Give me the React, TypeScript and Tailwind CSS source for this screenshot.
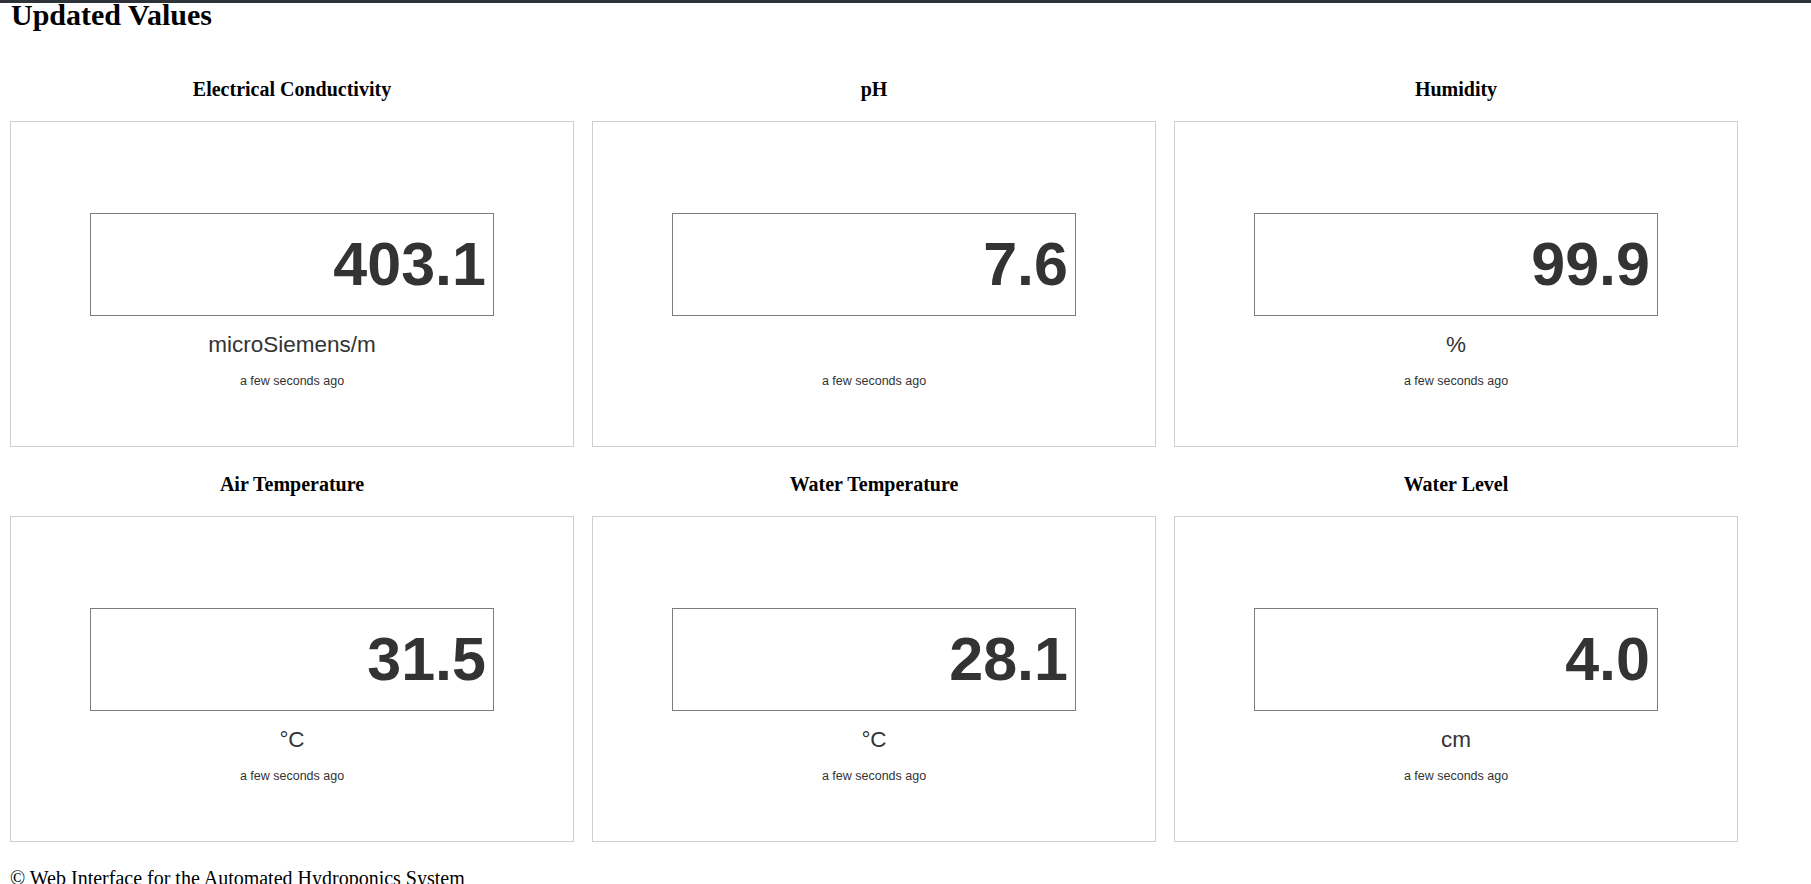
import React from 'react';

// --- Sensor readings shown on the dashboard ---
interface Reading {
  title: string;
  value: string;
  unit: string;
  updated: string;
}

const readings: Reading[] = [
  { title: 'Electrical Conductivity', value: '403.1', unit: 'microSiemens/m', updated: 'a few seconds ago' },
  { title: 'pH', value: '7.6', unit: '', updated: 'a few seconds ago' },
  { title: 'Humidity', value: '99.9', unit: '%', updated: 'a few seconds ago' },
  { title: 'Air Temperature', value: '31.5', unit: '°C', updated: 'a few seconds ago' },
  { title: 'Water Temperature', value: '28.1', unit: '°C', updated: 'a few seconds ago' },
  { title: 'Water Level', value: '4.0', unit: 'cm', updated: 'a few seconds ago' },
];

const ReadingCard: React.FC<{ reading: Reading }> = ({ reading }) => {
  return (
    <div className="flex flex-col">
      <h3 className="h-[24px] text-center text-[20px] leading-[24px] font-bold text-black font-['Liberation_Serif',serif]">
        {reading.title}
      </h3>
      <div className="mt-[20px] flex h-[326px] flex-col items-center border border-[#cfcfcf] bg-white pt-[91px] font-['Liberation_Sans',Arial,sans-serif] text-[#333]">
        <div className="flex h-[103px] w-[404px] items-center justify-end border border-[#787d82] pr-[7px]">
          <span className="text-[61px] leading-none font-bold">{reading.value}</span>
        </div>
        <div className="mt-[16px] h-[26px] text-[22.5px] leading-[26px]">{reading.unit}</div>
        <div className="mt-[15px] h-[16px] text-[12.5px] leading-[16px]">{reading.updated}</div>
      </div>
    </div>
  );
};

export default function App() {
  return (
    <div className="min-h-screen border-t-[3px] border-[#2e3239] bg-white">
      <h1 className="h-[24px] pl-[11px] text-[30px] leading-[24px] font-bold text-black font-['Liberation_Serif',serif]">
        Updated Values
      </h1>
      <div className="mt-[50px] grid w-[1728px] grid-cols-[564px_564px_564px] gap-x-[18px] gap-y-[25px] pl-[10px] box-content">
        {readings.map(r => (
          <ReadingCard key={r.title} reading={r} />
        ))}
      </div>
      <footer className="mt-[24px] pl-[10px] text-[20px] leading-[24px] text-black font-['Liberation_Serif',serif]">
        © Web Interface for the Automated Hydroponics System
      </footer>
    </div>
  );
}
